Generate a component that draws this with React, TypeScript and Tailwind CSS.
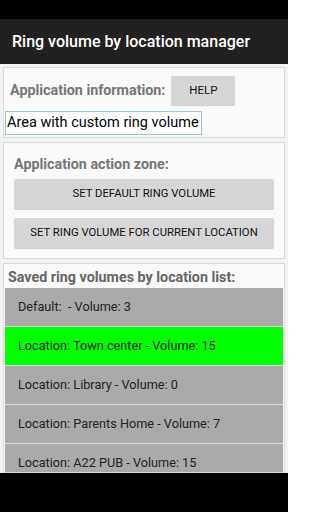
const rows = [
  { label: "Default:  - Volume: 3", active: false },
  { label: "Location: Town center - Volume: 15", active: true },
  { label: "Location: Library - Volume: 0", active: false },
  { label: "Location: Parents Home - Volume: 7", active: false },
  { label: "Location: A22 PUB - Volume: 15", active: false },
];

function GrayButton({ children, className }: { children: React.ReactNode; className?: string }) {
  return (
    <button
      className={
        "flex items-center justify-center whitespace-nowrap rounded-[2px] bg-[#d6d6d6] text-[11.3px] uppercase text-[#111] shadow-[0_1px_1px_rgba(0,0,0,0.18)] " +
        (className ?? "")
      }
    >
      {children}
    </button>
  );
}

export default function App() {
  return (
    <div className="flex h-[512px] w-[288px] flex-col overflow-hidden bg-black font-['Roboto',sans-serif]">
      <div className="h-[19px] shrink-0 bg-black" />
      <div className="flex h-[45px] shrink-0 items-center bg-[#212121] pl-[12px]">
        <span className="whitespace-nowrap text-[16px] font-medium text-white">Ring volume by location manager</span>
      </div>

      <div className="flex h-[409px] shrink-0 flex-col gap-[4px] overflow-hidden bg-[#f3f3f3] px-[3px] pt-[3px]">
        {/* info panel */}
        <div className="flex h-[71px] shrink-0 flex-col border border-[#dadada] bg-[#fafafa] pl-[1px]">
          <div className="mt-[8px] flex items-center">
            <span className="ml-[5px] whitespace-nowrap text-[14.3px] font-bold text-[#777]">Application information:</span>
            <GrayButton className="ml-[6px] h-[29px] w-[64px] text-[11.5px]">Help</GrayButton>
          </div>
          <div className="mt-[6px] flex h-[24px] w-[197px] items-center whitespace-nowrap border border-[#9cc4d2] bg-white pl-[1px] text-[14.5px] leading-none text-black">
            Area with custom ring volume
          </div>
        </div>

        {/* action panel */}
        <div className="flex h-[117px] shrink-0 flex-col border border-[#dadada] bg-[#fafafa] px-[10px]">
          <span className="mt-[11px] whitespace-nowrap text-[14.3px] font-bold text-[#777]">Application action zone:</span>
          <GrayButton className="mt-[4px] h-[30px] w-full">Set default ring volume</GrayButton>
          <GrayButton className="mt-[9px] h-[30px] w-full">Set ring volume for current location</GrayButton>
        </div>

        {/* saved list */}
        <div className="flex min-h-0 flex-1 flex-col border border-[#dadada] bg-[#fafafa] px-[1px]">
          <span className="mt-[3px] whitespace-nowrap pl-[3px] text-[14.3px] font-bold leading-[20px] text-[#666]">
            Saved ring volumes by location list:
          </span>
          <div className="mt-[1px] flex flex-col gap-[1px] overflow-hidden bg-[#d9d9d9]">
            {rows.map((r) => (
              <div
                key={r.label}
                className={
                  "flex h-[38px] shrink-0 items-center whitespace-pre pl-[13px] text-[12.7px] text-[#222] " +
                  (r.active ? "bg-[#00ff00]" : "bg-[#aaaaaa]")
                }
              >
                {r.label}
              </div>
            ))}
          </div>
        </div>
      </div>

      <div className="flex-1 bg-black" />
    </div>
  );
}
